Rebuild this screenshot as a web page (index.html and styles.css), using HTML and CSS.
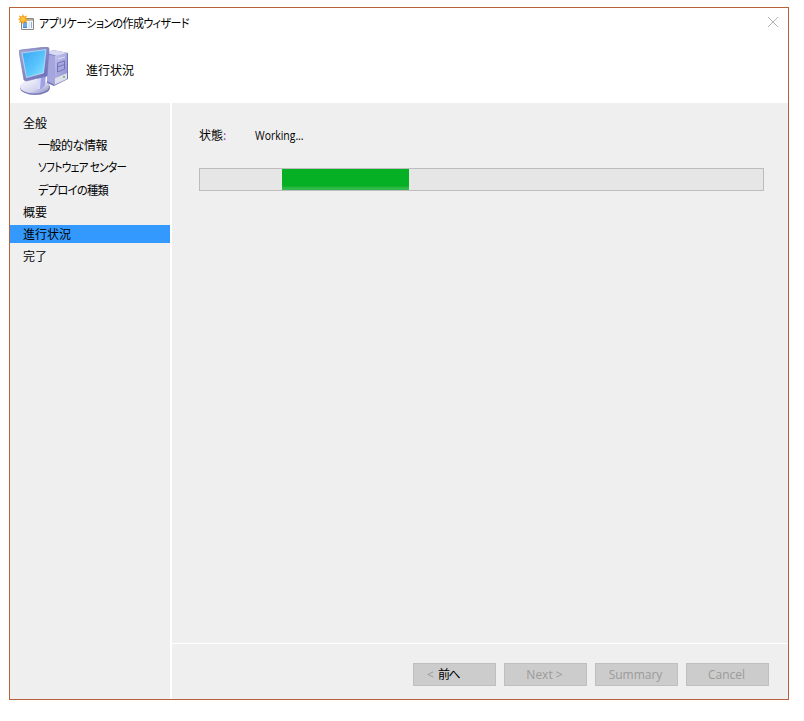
FILE: index.html
```html
<!DOCTYPE html>
<html lang="ja">
<head>
<meta charset="utf-8">
<title>アプリケーションの作成ウィザード</title>
<link rel="stylesheet" href="styles.css">
</head>
<body>
<main class="window">
  <header class="header">
    <div class="titlebar">
      <svg class="app-icon" width="17" height="17" viewBox="0 0 17 17">
        <path d="M3.500 4.500h12v11h-12z" fill="#f4f7fb" stroke="#8b8580"/>
        <path d="M8 5h7v2H8z" fill="#b9b4ac"/>
        <path d="M5 8h4v6H5z" fill="#3f86d3"/>
        <path d="M5 10h4M5 12h4" stroke="#9cc7f2"/>
        <path d="M10.500 9h1.500M10.500 11h1.500M10.500 13h1.500" stroke="#c4cfdd"/>
        <path d="M13.500 8v6" stroke="#8fb1d8"/>
        <path d="M5 0l1.200 2.400 2.800-1-1 2.800 2.600 1-2.600 1.200 1 2.600-2.800-1L5 10.500 3.800 8 1 9l1-2.600-2-1.200 2-1-1-2.800 2.800 1z" fill="#f5a31c"/>
        <circle cx="5" cy="5.200" r="2.300" fill="#ffc23a"/>
      </svg>
      <span class="title">アプリケーションの作成ウィザード</span>
      <svg class="close" width="12" height="12" viewBox="0 0 12 12"><path d="M1 1l10 10M11 1L1 11" stroke="#b4b4b4" fill="none"/></svg>
    </div>
    <div class="banner">
      <svg class="computer" width="50" height="49" viewBox="0 0 50 49">
        <defs>
          <linearGradient id="screen" x1="0" y1="0" x2="1" y2="1"><stop stop-color="#38a5f4"/><stop offset=".55" stop-color="#58c3fb"/><stop offset="1" stop-color="#8be6ff"/></linearGradient>
          <linearGradient id="frame" x1="0" y1="0" x2="1" y2="1"><stop stop-color="#a9acd0"/><stop offset="1" stop-color="#6568b5"/></linearGradient>
          <linearGradient id="front" x1="0" y1="0" x2="1" y2="1"><stop stop-color="#c6c6f0"/><stop offset="1" stop-color="#8f90d0"/></linearGradient>
          <linearGradient id="base" x1="0" y1="0" x2="1" y2="1"><stop stop-color="#fafaff"/><stop offset=".6" stop-color="#d5d6ee"/><stop offset="1" stop-color="#8385bd"/></linearGradient>
        </defs>
        <path d="M28 6l6-3 15 3v26L35 39l-7-3z" fill="#7375bd"/>
        <path d="M28 6l6-3 15 3-11 3z" fill="#d9daf3"/>
        <path d="M36 9l12-3v20l-12 5z" fill="url(#front)"/>
        <path d="M36 31l12-5v6l-13 6z" fill="#dedfeb"/>
        <path d="M28 7l8 2v29l-8-4z" fill="#a5a6dd"/>
        <path d="M38.500 16l7-2v8l-7 3zM38.500 20l7-2.500" fill="#a7a8de" stroke="#6668b2" stroke-width=".8"/>
        <path d="M39 12l7-2" stroke="#e0e0fa"/>
        <circle cx="45" cy="30" r="1" fill="#55bd55"/>
        <ellipse cx="16" cy="40.500" rx="15" ry="7.500" fill="#7779b8"/>
        <ellipse cx="15.500" cy="39.500" rx="14.500" ry="7" fill="url(#base)"/>
        <path d="M18 30l9-2-1 10q-4 6-8 4z" fill="#9fa2e0"/>
        <path d="M18 31l4-1-1 12-3 0z" fill="#d8dafa"/>
        <path d="M0 4Q0 3 2 3L27 0q3 0 3 2l-2 27-21 5-2-1z" fill="url(#frame)" stroke="#7779bb" stroke-width=".7"/>
        <path d="M3 6l24-3.500-2.500 23.500L7.500 30.500z" fill="url(#screen)" stroke="#d0e4fa" stroke-width=".7"/>
      </svg>
      <h1 class="heading">進行状況</h1>
    </div>
  </header>
  <div class="body">
    <nav class="sidebar">
      <div class="step"><span>全般</span></div>
      <div class="step sub"><span class="info">一般的な情報</span></div>
      <div class="step sub"><span class="center">ソフトウェア センター</span></div>
      <div class="step sub"><span class="deploy">デプロイの種類</span></div>
      <div class="step"><span>概要</span></div>
      <div class="step active"><span>進行状況</span></div>
      <div class="step"><span>完了</span></div>
    </nav>
    <section class="content">
      <div class="progress-page">
        <div class="status"><span class="label">状態<span class="colon">:</span></span><span class="working">Working...</span></div>
        <div class="track"><div class="bar"></div></div>
      </div>
      <footer class="footer">
        <button class="btn prev" disabled><span class="lt">&lt;</span><span class="ink">前へ</span></button>
        <button class="btn" disabled>Next &gt;</button>
        <button class="btn" disabled>Summary</button>
        <button class="btn" disabled>Cancel</button>
      </footer>
    </section>
  </div>
</main>
</body>
</html>
```
FILE: styles.css
```css
* { box-sizing: border-box; }
body {
  margin: 0;
  padding: 7px 0 0 9px;
  background: #fff;
  color: #000;
  font: 12px/18px "Noto Sans CJK JP", sans-serif;
}
.window {
  display: flex;
  flex-direction: column;
  width: 780px;
  height: 693px;
  border: 1px solid #b5623a;
  background: #efefef;
}
.header { height: 95px; background: #fff; }
.titlebar { display: flex; height: 30px; padding: 6px 9px 0 8px; }
.app-icon { flex: none; }
.title {
  margin-left: 4px;
  font-feature-settings: "palt";
  letter-spacing: -0.7px;
  white-space: nowrap;
  transform: scaleX(0.92);
  transform-origin: left;
}
.close { margin: 2px 0 0 auto; }
.banner { display: flex; padding: 9px 0 0 9px; }
.heading { margin: 14px 0 0 17px; font-size: 12px; line-height: 18px; font-weight: 400; }
.body { display: flex; flex: 1; min-height: 0; }
.sidebar { width: 160px; padding-top: 11px; }
.step { height: 18px; margin-bottom: 4.2px; padding-left: 13px; line-height: 18px; white-space: nowrap; }
.sub { padding-left: 28px; }
.active { background: #3399ff; }
.info { letter-spacing: -0.5px; }
.center, .deploy {
  display: inline-block;
  font-feature-settings: "palt";
  letter-spacing: -0.7px;
  transform: scaleX(0.88);
  transform-origin: left;
}
.deploy { transform: scaleX(0.93); }
.content { display: flex; flex: 1; flex-direction: column; border-left: 2px solid #fff; }
.progress-page { flex: 1; padding: 23px 24px 0 27px; }
.status { display: flex; height: 18px; }
.label { width: 56px; }
.colon { color: #a040a0; }
.working {
  font-family: "Open Sans", sans-serif;
  line-height: 19px;
  transform: scaleX(0.87);
  transform-origin: left;
}
.track {
  height: 23px;
  margin-top: 24px;
  padding-left: 82px;
  border: 1px solid #bcbcbc;
  background: #e6e6e6;
}
.bar { width: 127px; height: 21px; background: linear-gradient(#06b025 0 17px, #32b94b 19px 21px); }
.footer {
  display: flex;
  gap: 8px;
  height: 56px;
  padding: 19px 19px 0 0;
  justify-content: flex-end;
  border-top: 1px solid #fff;
}
.btn {
  width: 83px;
  height: 23px;
  padding: 0 2px 0 0;
  border: 1px solid #bfbfbf;
  background: #ccc;
  color: #9b9b9b;
  font: 12px/21px "Open Sans", "Noto Sans CJK JP", sans-serif;
}
.prev { padding-left: 13px; text-align: left; }
.ink {
  display: inline-block;
  margin-left: 4px;
  color: #000;
  font-family: "Noto Sans CJK JP", sans-serif;
  line-height: 18px;
  letter-spacing: -1.5px;
}
```
